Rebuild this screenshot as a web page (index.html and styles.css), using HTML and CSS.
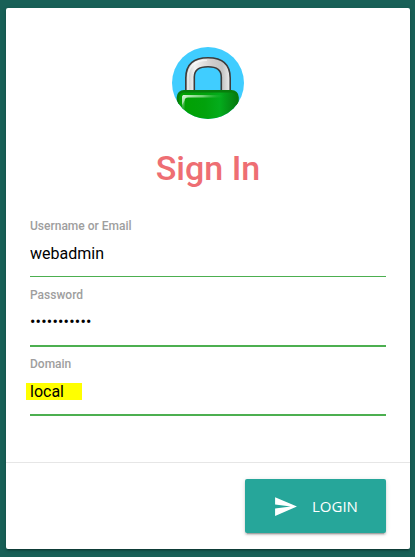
FILE: index.html
```html
<!DOCTYPE html>
<html lang="en">
<head>
<meta charset="utf-8">
<title>Sign In</title>
<link rel="stylesheet" href="styles.css">
</head>
<body>
<form class="card">
  <div class="content">
    <svg class="logo" viewBox="0 0 72 72" aria-hidden="true">
      <defs>
        <clipPath id="circle"><circle cx="36" cy="36" r="36"/></clipPath>
        <linearGradient id="steel" x1="0" y1="0" x2="1" y2="0">
          <stop offset="0" stop-color="#c4c4c4"/><stop offset=".2" stop-color="#f2f2f2"/>
          <stop offset=".6" stop-color="#d0cccb"/><stop offset=".82" stop-color="#c4c4c4"/><stop offset="1" stop-color="#eee"/>
        </linearGradient>
        <linearGradient id="green" x1="0" y1="0" x2="1" y2="0">
          <stop offset="0" stop-color="#00a000"/><stop offset=".45" stop-color="#02a20c"/>
          <stop offset=".7" stop-color="#04ac1c"/><stop offset="1" stop-color="#067a10"/>
        </linearGradient>
        <linearGradient id="shineTop" x1="0" y1="0" x2="1" y2="0">
          <stop offset="0" stop-color="#d4f4d4"/><stop offset=".5" stop-color="#8fdc8f" stop-opacity=".8"/><stop offset="1" stop-color="#20b030" stop-opacity="0"/>
        </linearGradient>
        <linearGradient id="shineSide" x1="0" y1="0" x2="0" y2="1">
          <stop offset="0" stop-color="#d4f4d4"/><stop offset="1" stop-color="#20a030" stop-opacity=".1"/>
        </linearGradient>
      </defs>
      <g clip-path="url(#circle)">
        <rect width="72" height="72" fill="#40cdff"/>
        <path d="M13.800 50V31C13.800 17 22 10.700 36 10.700S58.200 17 58.200 31V50H49.300V30C49.300 22.500 44 19.800 36 19.800S22.300 22.500 22.300 30V50Z" fill="url(#steel)" stroke="#3c3c3c" stroke-width="1.600"/>
        <path d="M16 44V31C16 18 24 13.200 35 13.200" fill="none" stroke="#fff" stroke-opacity=".6" stroke-width="1.500"/>
        <rect x="6" y="44.200" width="59.500" height="44" rx="6" fill="url(#green)" stroke="#087d0b" stroke-width="2.600"/>
        <path d="M11 48H52V50.500H16Q12.500 50.500 12.300 54L10 58V50Z" fill="url(#shineTop)"/>
        <path d="M10 51Q10 48 13 48L14 50Q12.500 51 12.500 54V68L10 65Z" fill="url(#shineSide)"/>
      </g>
    </svg>
    <h1 class="title">Sign In</h1>
    <label class="field first">
      <span class="label">Username or Email</span>
      <input class="input" type="text" value="webadmin">
    </label>
    <label class="field">
      <span class="label">Password</span>
      <input class="input masked" type="text" value="•••••••••••">
    </label>
    <label class="field">
      <span class="label">Domain</span>
      <input class="input marked" type="text" value="local">
    </label>
  </div>
  <div class="actions">
    <button class="login" type="button">
      <svg class="send" viewBox="0 0 24 24" aria-hidden="true"><path d="M2.010 21L23 12 2.010 3 2 10l15 2-15 2z" fill="currentColor"/></svg>
      <span>LOGIN</span>
    </button>
  </div>
</form>
</body>
</html>
```

FILE: styles.css
```css
* { box-sizing: border-box; }

body {
  margin: 0;
  height: 557px;
  padding: 8px 5px 8px 6px;
  overflow: hidden;
  background: #186057;
  font-family: Roboto, sans-serif;
}

.card {
  display: flex;
  flex-direction: column;
  height: 541px;
  border-radius: 2px;
  background: #fff;
  box-shadow: 0 2px 2px rgba(0, 0, 0, .14), 0 1px 5px rgba(0, 0, 0, .12), 0 3px 1px -2px rgba(0, 0, 0, .2);
}

.content {
  display: flex;
  flex-direction: column;
  height: 454px;
  padding: 39px 24px 0;
}

.logo {
  display: block;
  width: 72px;
  height: 72px;
  align-self: center;
}

.title {
  margin: 29px 0 0;
  color: #ee6e73;
  font-size: 34px;
  font-weight: 500;
  line-height: 40px;
  text-align: center;
}

.field {
  display: flex;
  flex-direction: column;
  height: 69px;
  padding-top: 10px;
  border-bottom: 2px solid #4caf50;
}

.field.first {
  height: 69px;
  margin-top: 20px;
  padding-top: 11px;
  border-bottom-width: 1px;
  margin-bottom: 1px;
}

.label {
  color: #9e9e9e;
  font-size: 12px;
  font-weight: 500;
  line-height: 14px;
}

.input {
  width: 100%;
  height: 19px;
  margin-top: 11px;
  padding: 0;
  border: 0;
  outline: 0;
  background: transparent;
  color: #000;
  font: 400 16px/19px Roboto, sans-serif;
}

.masked {
  margin-top: 10px;
  letter-spacing: .2px;
}

.marked {
  width: 56px;
  height: 17px;
  margin: 12px 0 0 -4px;
  padding-left: 4px;
  background: #ff0;
}

.actions {
  display: flex;
  justify-content: flex-end;
  height: 87px;
  padding: 16px 24px;
  border-top: 1px solid #e6e6e6;
}

.login {
  display: flex;
  align-items: center;
  gap: 14px;
  width: 141px;
  height: 54px;
  padding: 0 0 0 28px;
  border: 0;
  border-radius: 2px;
  background: #26a69a;
  color: #fff;
  font: 400 15px/24px "Open Sans", sans-serif;
  box-shadow: 0 2px 2px rgba(0, 0, 0, .14), 0 1px 5px rgba(0, 0, 0, .12), 0 3px 1px -2px rgba(0, 0, 0, .2);
}

.send {
  width: 25px;
  height: 25px;
}
```
